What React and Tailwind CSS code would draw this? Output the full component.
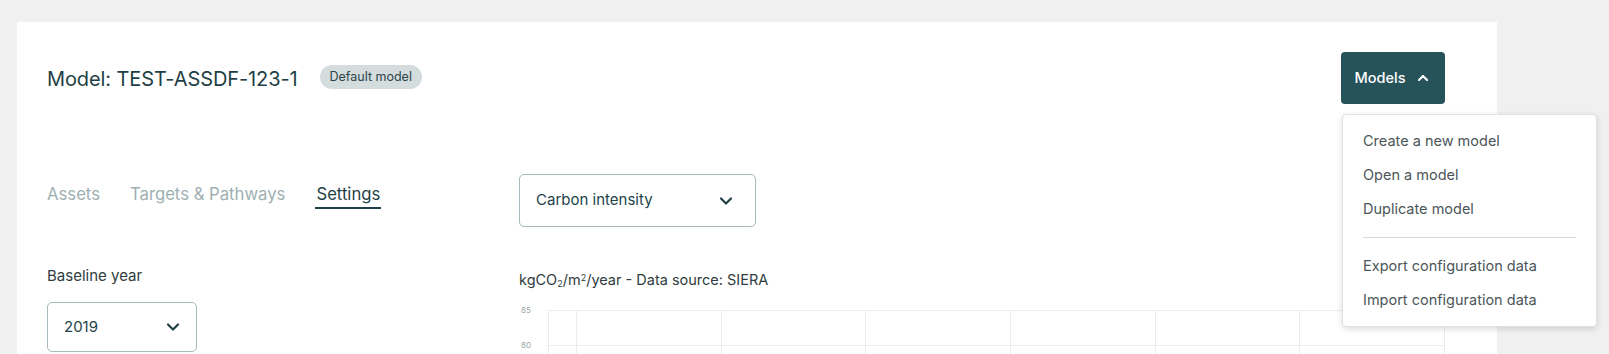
import { ChevronDown, ChevronUp } from 'lucide-react'

const menuItems = ['Create a new model', 'Open a model', 'Duplicate model']
const dataItems = ['Export configuration data', 'Import configuration data']

function Select({ value, className }) {
    return (
        <div
            className={
                'flex items-center justify-between rounded-[5px] border border-[#a9b9bd] bg-white text-[15px] text-[#23434b] ' +
                className
            }
        >
            <span>{value}</span>
            <ChevronDown size={20} strokeWidth={2.6} className="text-[#1f3f46]" />
        </div>
    )
}

function Chart() {
    const cols = [0, 1, 2, 3, 4, 5, 6]
    const rows = [0, 1, 2]
    return (
        <div className="mt-5 flex">
            <div className="-mt-[5px] flex w-[29px] flex-col text-[8px] leading-[10px] text-[#97a4a7]">
                <span className="h-[35px] pl-[2px]">85</span>
                <span className="h-[35px] pl-[2px]">80</span>
            </div>
            <div className="grid flex-1 grid-cols-[28px_repeat(6,1fr)] border-l border-t border-[#ececec]">
                {rows.map((r) =>
                    cols.map((c) => (
                        <div
                            key={r + '-' + c}
                            className="h-[35px] border-b border-r border-[#ececec]"
                        />
                    ))
                )}
            </div>
        </div>
    )
}

export default function App() {
    return (
        <div
            className="h-[354px] overflow-hidden bg-[#f0f0f0] pl-[17px] pt-[22px]"
            style={{ fontFamily: 'Inter, "Noto Sans", sans-serif' }}
        >
            <div className="h-[400px] w-[1480px] bg-white pl-[30px] pr-[52px] pt-[30px]">
                {/* header */}
                <div className="flex h-[52px] items-center justify-between">
                    <div className="flex items-center pt-[2px]">
                        <h1 className="text-[20px] font-normal tracking-[-0.1px] text-[#1f3f46]">
                            Model: TEST-ASSDF-123-1
                        </h1>
                        <span className="ml-[22px] -mt-[5px] rounded-full bg-[#d4dcdd] px-[10px] py-[4px] text-[12.5px] leading-4 text-[#2b454b]">
                            Default model
                        </span>
                    </div>
                    <div className="relative">
                        <button className="flex h-[52px] w-[104px] items-center justify-center gap-[10px] rounded-[4px] bg-[#26525a] text-[14.5px] font-medium text-white">
                            Models
                            <ChevronUp size={16} strokeWidth={3.2} />
                        </button>
                        <div className="absolute left-[1px] top-[62px] z-10 w-[255px] rounded-[4px] border border-[#dde3e4] bg-white pb-[9px] pt-[9px] shadow-[0_2px_6px_rgba(0,0,0,0.14)]">
                            {menuItems.map((m) => (
                                <div
                                    key={m}
                                    className="flex h-[34px] items-center px-5 text-[14.5px] text-[#4c5659]"
                                >
                                    {m}
                                </div>
                            ))}
                            <div className="mx-5 my-[11px] h-px bg-[#d3dcdd]" />
                            {dataItems.map((m) => (
                                <div
                                    key={m}
                                    className="flex h-[34px] items-center px-5 text-[14.5px] text-[#4c5659]"
                                >
                                    {m}
                                </div>
                            ))}
                        </div>
                    </div>
                </div>

                {/* body */}
                <div className="mt-[70px] flex">
                    <div className="w-[472px] shrink-0">
                        <div className="mt-2 flex gap-[30px] text-[16.7px] leading-6">
                            <span className="text-[#9eafb2]">Assets</span>
                            <span className="text-[#9eafb2]">Targets &amp; Pathways</span>
                            <span className="border-b-2 border-[#1f3f46] px-px pb-px text-[#1f3f46]">
                                Settings
                            </span>
                        </div>
                        <div className="mt-[57px] text-[15px] leading-5 text-[#2f3c40]">
                            Baseline year
                        </div>
                        <Select value="2019" className="mt-4 h-[50px] w-[150px] pl-4 pr-[13px]" />
                    </div>
                    <div className="w-[926px]">
                        <Select
                            value="Carbon intensity"
                            className="h-[53px] w-[237px] pl-4 pr-[19px]"
                        />
                        <div className="mt-[43px] text-[14.5px] leading-5 text-[#2f3c40]">
                            kgCO<sub className="text-[9px]">2</sub>/m<sup className="text-[9px]">2</sup>/year - Data source: SIERA
                        </div>
                        <Chart />
                    </div>
                </div>
            </div>
        </div>
    )
}
